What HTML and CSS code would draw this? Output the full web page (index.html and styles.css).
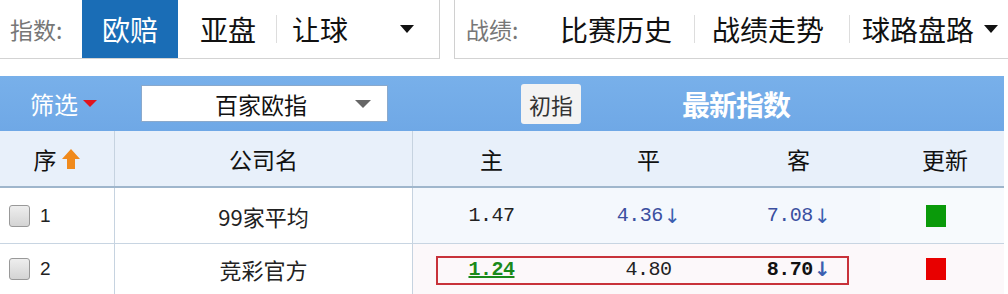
FILE: index.html
```html
<!DOCTYPE html>
<html lang="zh">
<head>
<meta charset="utf-8">
<link rel="stylesheet" href="styles.css">
</head>
<body>
<div class="page">
  <div class="topbar">
    <div class="tabbox left">
      <span class="label">指数:</span>
      <span class="tab active">欧赔</span>
      <span class="tab t-ya">亚盘</span>
      <span class="sep s1"></span>
      <span class="tab">让球</span>
      <span class="caret"></span>
    </div>
    <div class="tabbox right">
      <span class="label">战绩:</span>
      <span class="tab">比赛历史</span>
      <span class="sep s2"></span>
      <span class="tab">战绩走势</span>
      <span class="sep s3"></span>
      <span class="tab">球路盘路</span>
      <span class="caret"></span>
    </div>
  </div>

  <div class="table">
    <div class="toolbar">
      <span class="filter">筛选<span class="red-caret"></span></span>
      <div class="select">
        <span class="sel-text">百家欧指</span>
        <span class="sel-caret"></span>
      </div>
      <span class="btn-init">初指</span>
      <span class="latest">最新指数</span>
    </div>

    <div class="row head">
      <div class="c c-seq">序<svg class="up" width="20" height="22" viewBox="0 0 20 22"><path d="M10 1 L19 11 L14 11 L14 21 L6 21 L6 11 L1 11 Z" fill="#f08a1c"/></svg></div>
      <div class="c c-name">公司名</div>
      <div class="c c-odd">主</div>
      <div class="c c-odd">平</div>
      <div class="c c-odd c-away">客</div>
      <div class="c c-upd">更新</div>
    </div>

    <div class="row data r1">
      <div class="c c-seq left-al"><span class="cb"></span><span class="num">1</span></div>
      <div class="c c-name">99家平均</div>
      <div class="c c-odd mono">1.47</div>
      <div class="c c-odd mono blue">4.36<span class="arr">↓</span></div>
      <div class="c c-odd mono blue c-away">7.08<span class="arr">↓</span></div>
      <div class="c c-upd"><span class="sq green"></span></div>
    </div>

    <div class="row data r2">
      <div class="c c-seq left-al"><span class="cb"></span><span class="num">2</span></div>
      <div class="c c-name">竞彩官方</div>
      <div class="c c-odd mono green-t">1.24</div>
      <div class="c c-odd mono">4.80</div>
      <div class="c c-odd mono bold c-away">8.70<span class="arr">↓</span></div>
      <div class="c c-upd"><span class="sq red"></span></div>
      <div class="hl-box"></div>
    </div>
  </div>
</div>
</body>
</html>
```

FILE: styles.css
```css
* { box-sizing: border-box; }
html, body { margin: 0; padding: 0; background: #fff; }
body {
  width: 1008px;
  height: 294px;
  overflow: hidden;
  font-family: "Noto Sans CJK SC", "Noto Sans", sans-serif;
  color: #111;
}
.page { width: 1008px; }

.topbar {
  display: flex;
  height: 59px;
  gap: 14px;
}
.tabbox {
  display: flex;
  align-items: center;
  height: 59px;
  border-bottom: 1px solid #d3d3d3;
  background: #fff;
  font-size: 28px;
  white-space: nowrap;
  flex-shrink: 0;
}
.tabbox.left {
  width: 440px;
  border-right: 1px solid #d0d0d0;
  padding-left: 10px;
}
.tabbox.right {
  width: 554px;
  border-left: 1px solid #d0d0d0;
  padding-left: 11px;
}
.label {
  color: #777;
  font-size: 23px;
  flex-shrink: 0;
}
.left .label { width: 72px; }
.right .label { width: 94px; }
.tab { line-height: 58px; color: #111; flex-shrink: 0; }
.tab.active {
  background: #1a6db6;
  color: #fff;
  width: 96px;
  height: 58px;
  text-align: center;
}
.t-ya { margin-left: 22px; }
.sep {
  width: 1px;
  height: 28px;
  background: #ddd;
  flex-shrink: 0;
}
.s1 { margin: 0 15px 0 20px; }
.s2 { margin: 0 17px 0 22px; }
.s3 { margin: 0 12px 0 25px; }
.caret {
  width: 0; height: 0;
  border-left: 7px solid transparent;
  border-right: 7px solid transparent;
  border-top: 8px solid #111;
  margin-left: 52px;
  flex-shrink: 0;
}
.right .caret { margin-left: 10px; }

.table {
  width: 1004px;
  margin-top: 17px;
}
.toolbar {
  display: flex;
  align-items: center;
  height: 55px;
  background: linear-gradient(#78b0ea, #6fa8e6);
  white-space: nowrap;
}
.toolbar > * { flex-shrink: 0; }
.filter {
  color: #fff;
  font-size: 24px;
  margin-left: 30px;
  display: flex;
  align-items: center;
}
.red-caret {
  width: 0; height: 0;
  border-left: 7px solid transparent;
  border-right: 7px solid transparent;
  border-top: 7px solid #e0141e;
  margin-left: 5px;
}
.select {
  margin-left: 44px;
  width: 247px;
  height: 37px;
  background: #fff;
  border: 1px solid #8aa9cc;
  display: flex;
  align-items: center;
  font-size: 23px;
}
.sel-text { margin-left: 73px; }
.sel-caret {
  width: 0; height: 0;
  border-left: 8px solid transparent;
  border-right: 8px solid transparent;
  border-top: 8px solid #666;
  margin-left: 48px;
}
.btn-init {
  margin-left: 133px;
  width: 60px;
  height: 40px;
  background: #f3f3f3;
  border-radius: 3px;
  font-size: 22px;
  color: #333;
  display: flex;
  align-items: center;
  justify-content: center;
}
.latest {
  margin-left: 101px;
  color: #fff;
  font-weight: 700;
  font-size: 28px;
  letter-spacing: -1px;
}

.row {
  display: grid;
  grid-template-columns: 115px 298px 157px 157px 153px 124px;
  position: relative;
}
.row.head {
  height: 57px;
  background: #e8f0fa;
  border-bottom: 2px solid #9fb6cc;
  font-size: 23px;
}
.c {
  display: flex;
  align-items: center;
  justify-content: center;
}
.c-seq, .c-name { border-right: 1px solid #c6d3e0; }
.c-away { padding-right: 10px; }
.up { margin-left: 4px; }
.row.head .c-upd { padding-left: 6px; }

.row.data {
  height: 56px;
  border-bottom: 1px solid #c8d5e2;
  font-size: 22px;
  color: #222;
}
.row.r2 { height: 50px; border-bottom: none; }
.r1 .c-odd { background: #f4f8fd; }
.r2 .c-odd, .r2 .c-upd { background: #fcf8fa; }
.r1 .c-upd { background: #f7fafd; }
.left-al { justify-content: flex-start; padding-left: 9px; }
.cb {
  width: 21px;
  height: 22px;
  border: 1px solid #999;
  border-radius: 3px;
  background: linear-gradient(#eee, #d4d4d4);
}
.num { margin-left: 10px; font-family: "Liberation Sans", sans-serif; font-size: 19px; }
.mono {
  font-family: "Liberation Mono", "DejaVu Sans Mono", monospace;
  font-size: 20px;
  letter-spacing: -0.5px;
}
.blue { color: #3b4fa0; }
.arr { color: #3b5fb0; font-family: "DejaVu Sans", sans-serif; font-size: 20px; margin-left: 1px; }
.green-t { color: #1a8a1a; font-weight: 700; text-decoration: underline; }
.bold { font-weight: 700; color: #111; }
.sq { width: 20px; height: 22px; display: block; margin-right: 12px; }
.sq.green { background: #0a9a0a; }
.sq.red { background: #e80000; }

.hl-box {
  position: absolute;
  left: 436px;
  top: 12px;
  width: 413px;
  height: 29px;
  border: 2px solid #c8323a;
  pointer-events: none;
}
```
